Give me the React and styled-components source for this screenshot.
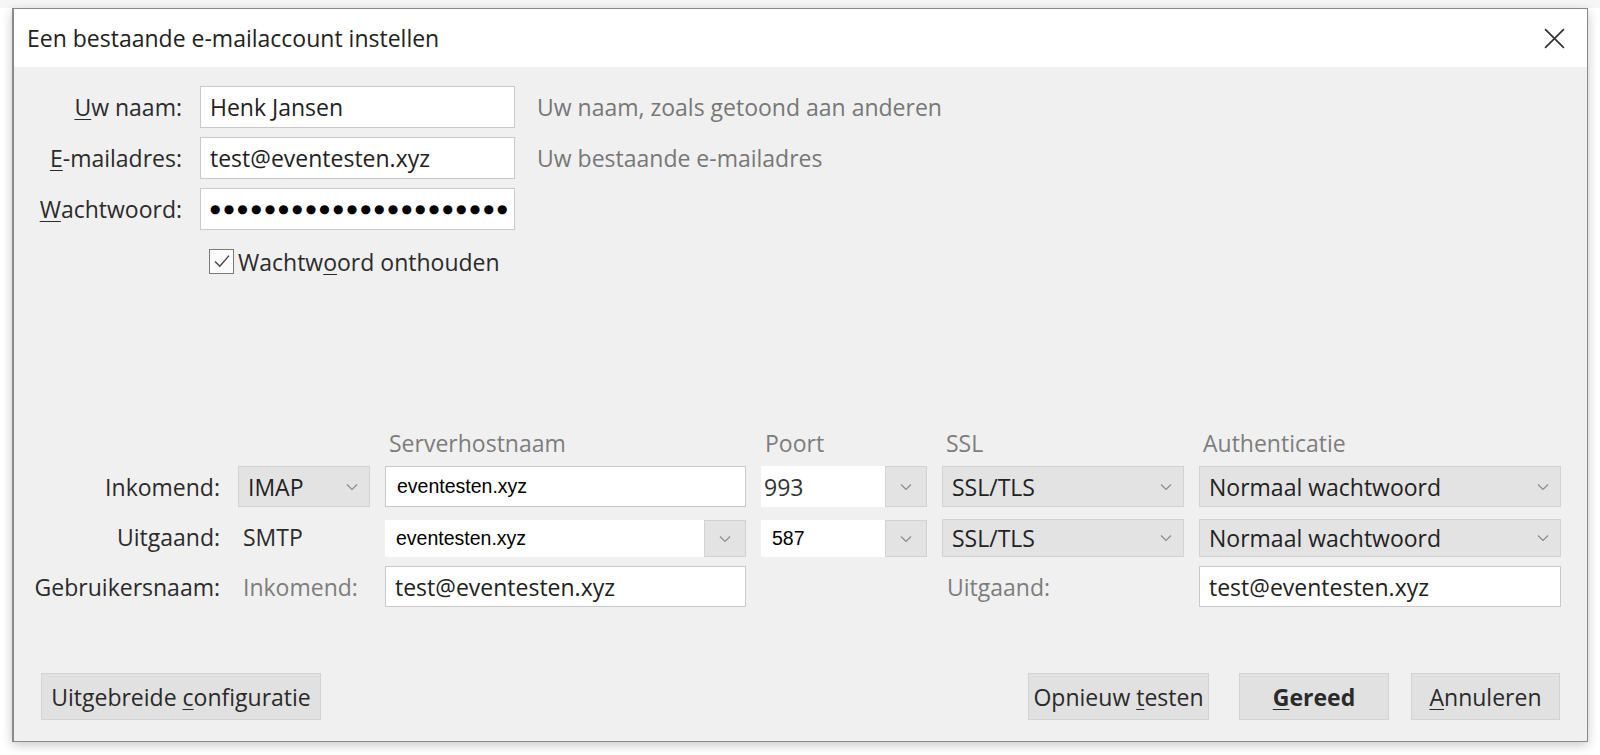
import React from 'react'
import styled, { createGlobalStyle } from 'styled-components'

const GlobalStyle = createGlobalStyle`
  html, body {
    margin: 0;
    padding: 0;
    background: #ffffff;
  }
  body {
    font-family: "Open Sans", "Noto Sans", sans-serif;
  }
`

const Page = styled.div`
  width: 1600px;
  height: 755px;
  box-sizing: border-box;
  padding: 8px 12px 13px 12px;
  display: flex;
  background: linear-gradient(#f6f6f6 0, #f6f6f6 8px, #ffffff 8px);
`

const Dialog = styled.div`
  flex: 1;
  display: flex;
  flex-direction: column;
  border: 1px solid #8a8a8a;
  border-left-width: 2px;
  box-shadow: 0 3px 10px rgba(0, 0, 0, 0.22);
  background: #f0f0f0;
`

const TitleBar = styled.div`
  height: 58px;
  background: #ffffff;
  display: flex;
  align-items: center;
  justify-content: space-between;
  padding: 0 21px 0 13px;
  font-size: 23px;
  color: #222;
`

const CloseButton = styled.div`
  width: 24px;
  height: 24px;
  display: flex;
  align-items: center;
  justify-content: center;
`

const Body = styled.div`
  flex: 1;
  display: flex;
  flex-direction: column;
  padding: 19px 24px 21px 0;
  font-size: 23px;
  color: #2b2b2b;
`

const AccountGrid = styled.div`
  display: grid;
  grid-template-columns: 168px 315px auto;
  grid-auto-rows: 42px;
  column-gap: 18px;
  row-gap: 9px;
  align-items: center;
`

const Label = styled.label`
  text-align: right;
  white-space: nowrap;
  color: #2b2b2b;
`

const Key = styled.span`
  text-decoration: underline;
  text-underline-offset: 3px;
  text-decoration-thickness: 1px;
`

const TextBox = styled.div`
  height: ${p => p.$h || 42}px;
  box-sizing: border-box;
  background: #ffffff;
  border: 1px solid #c9c9c9;
  display: flex;
  align-items: center;
  padding-left: ${p => (p.$arial ? 11 : 9)}px;
  font-family: ${p => (p.$arial ? '"Liberation Sans", Arial, sans-serif' : 'inherit')};
  font-size: ${p => (p.$arial ? 19.5 : 23)}px;
  color: ${p => (p.$arial ? '#000' : '#222')};
  white-space: nowrap;
  overflow: hidden;
`

const Dots = styled.span`
  font-family: "DejaVu Sans", sans-serif;
  font-size: 12px;
  letter-spacing: 3.2px;
  color: #000;
`

const Hint = styled.span`
  color: #777;
  padding-left: 4px;
  white-space: nowrap;
`

const CheckRow = styled.div`
  grid-column: 2 / 4;
  display: flex;
  align-items: center;
  gap: 4px;
  padding-left: 9px;
  margin-top: 3px;
`

const CheckBox = styled.div`
  width: 25px;
  height: 25px;
  box-sizing: border-box;
  border: 1px solid #7a7a7a;
  background: #fbfbfb;
  display: flex;
  align-items: center;
  justify-content: center;
`

const Spacer = styled.div`
  flex: 1;
`

const ServerGrid = styled.div`
  display: grid;
  grid-template-columns: 209px 132px 361px 166px 242px 362px;
  grid-template-rows: 28px 41px 41px 41px;
  column-gap: 15px;
  row-gap: 9px;
  align-items: center;
  margin-bottom: 66px;
`

const ColHead = styled.div`
  grid-column: ${p => p.$col};
  color: #7d7d7d;
  padding-left: 4px;
  align-self: end;
  line-height: 28px;
`

const RowLabel = styled.div`
  text-align: right;
  padding-right: 3px;
  color: #2b2b2b;
  white-space: nowrap;
`

const Plain = styled.div`
  padding-left: 5px;
  color: ${p => (p.$muted ? '#7d7d7d' : '#2b2b2b')};
  white-space: nowrap;
`

const Select = styled.div`
  height: ${p => p.$h || 41}px;
  align-self: ${p => (p.$h ? 'end' : 'center')};
  box-sizing: border-box;
  background: #e3e3e3;
  border: 1px solid #d2d2d2;
  display: flex;
  align-items: center;
  justify-content: space-between;
  padding: 0 11px 0 9px;
  color: #222;
  white-space: nowrap;
`

const Combo = styled.div`
  height: ${p => p.$h || 41}px;
  align-self: ${p => (p.$h ? 'end' : 'center')};
  display: flex;
  align-items: stretch;
  background: #ffffff;
`

const ComboText = styled.div`
  flex: 1;
  display: flex;
  align-items: center;
  padding-left: ${p => (p.$arial ? 11 : 3)}px;
  font-family: ${p => (p.$arial ? '"Liberation Sans", Arial, sans-serif' : 'inherit')};
  font-size: ${p => (p.$arial ? 19.5 : 23)}px;
  color: ${p => (p.$arial ? '#000' : '#333')};
`

const ComboButton = styled.div`
  width: 42px;
  background: #e3e3e3;
  border: 1px solid #d2d2d2;
  box-sizing: border-box;
  display: flex;
  align-items: center;
  justify-content: center;
`

const ButtonRow = styled.div`
  display: flex;
  align-items: center;
  padding-left: 27px;
  margin-right: 3px;
`

const Button = styled.button`
  height: 47px;
  width: ${p => p.$w}px;
  margin-left: ${p => p.$gap || 0}px;
  box-sizing: border-box;
  background: #e1e1e1;
  border: 1px solid #d3d3d3;
  font-family: inherit;
  font-size: 23px;
  font-weight: ${p => (p.$primary ? 700 : 400)};
  color: #2a2a2a;
  padding: 0;
  cursor: default;
`

const Chevron = () => (
  <svg width="12" height="8" viewBox="0 0 12 8">
    <path d="M1 1.5 L6 6.5 L11 1.5" fill="none" stroke="#8c8c8c" strokeWidth="1.2" />
  </svg>
)

const CloseIcon = () => (
  <svg width="21" height="21" viewBox="0 0 20 20">
    <path d="M1 1 L19 19 M19 1 L1 19" stroke="#333" strokeWidth="1.6" fill="none" />
  </svg>
)

const CheckIcon = () => (
  <svg width="18" height="15" viewBox="0 0 16 14">
    <path d="M1.5 7 L6 11.5 L14.5 1.5" fill="none" stroke="#444" strokeWidth="1.3" />
  </svg>
)

export default function App() {
  return (
    <Page>
      <GlobalStyle />
      <Dialog>
        <TitleBar>
          <span>Een bestaande e-mailaccount instellen</span>
          <CloseButton><CloseIcon /></CloseButton>
        </TitleBar>
        <Body>
          <AccountGrid>
            <Label><Key>U</Key>w naam:</Label>
            <TextBox>Henk Jansen</TextBox>
            <Hint>Uw naam, zoals getoond aan anderen</Hint>

            <Label><Key>E</Key>-mailadres:</Label>
            <TextBox>test@eventesten.xyz</TextBox>
            <Hint>Uw bestaande e-mailadres</Hint>

            <Label><Key>W</Key>achtwoord:</Label>
            <TextBox><Dots>{'●'.repeat(22)}</Dots></TextBox>
            <span />

            <CheckRow>
              <CheckBox><CheckIcon /></CheckBox>
              <span>Wachtw<Key>o</Key>ord onthouden</span>
            </CheckRow>
          </AccountGrid>

          <Spacer />

          <ServerGrid>
            <ColHead $col={3}>Serverhostnaam</ColHead>
            <ColHead $col={4}>Poort</ColHead>
            <ColHead $col={5}>SSL</ColHead>
            <ColHead $col={6}>Authenticatie</ColHead>

            <RowLabel>Inkomend:</RowLabel>
            <Select>IMAP <Chevron /></Select>
            <TextBox $h={41} $arial>eventesten.xyz</TextBox>
            <Combo>
              <ComboText>993</ComboText>
              <ComboButton><Chevron /></ComboButton>
            </Combo>
            <Select>SSL/TLS <Chevron /></Select>
            <Select>Normaal wachtwoord <Chevron /></Select>

            <RowLabel>Uitgaand:</RowLabel>
            <Plain>SMTP</Plain>
            <Combo $h={37}>
              <ComboText $arial>eventesten.xyz</ComboText>
              <ComboButton><Chevron /></ComboButton>
            </Combo>
            <Combo $h={37}>
              <ComboText $arial>587</ComboText>
              <ComboButton><Chevron /></ComboButton>
            </Combo>
            <Select $h={38}>SSL/TLS <Chevron /></Select>
            <Select $h={38}>Normaal wachtwoord <Chevron /></Select>

            <RowLabel>Gebruikersnaam:</RowLabel>
            <Plain $muted>Inkomend:</Plain>
            <TextBox $h={41}>test@eventesten.xyz</TextBox>
            <span />
            <Plain $muted>Uitgaand:</Plain>
            <TextBox $h={41}>test@eventesten.xyz</TextBox>
          </ServerGrid>

          <ButtonRow>
            <Button $w={280}>Uitgebreide <Key>c</Key>onfiguratie</Button>
            <Spacer />
            <Button $w={181}>Opnieuw <Key>t</Key>esten</Button>
            <Button $w={150} $gap={30} $primary><Key>G</Key>ereed</Button>
            <Button $w={149} $gap={22}><Key>A</Key>nnuleren</Button>
          </ButtonRow>
        </Body>
      </Dialog>
    </Page>
  )
}
